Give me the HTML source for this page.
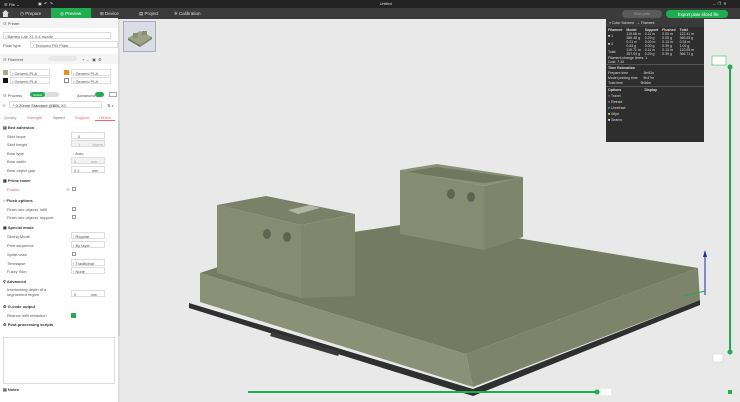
<!DOCTYPE html>
<html><head><meta charset="utf-8"><style>
*{margin:0;padding:0;box-sizing:border-box}
body{width:740px;height:402px;overflow:hidden;background:#e9e9e9;font-family:"Liberation Sans",sans-serif;font-size:4px;color:#555;position:relative}
.a{position:absolute}
.t{position:absolute;white-space:nowrap}
.hd{position:absolute;left:0;width:118px;height:10px;background:#f4f4f4;font-weight:bold;color:#333}
.inp{position:absolute;height:7px;border:1px solid #ddd;background:#fff}
.chk{position:absolute;width:4px;height:4px;border:1px solid #999}
.lg td{padding:0 2px;font-size:3.5px;color:#ddd;white-space:nowrap}
</style></head><body>
<!-- title bar -->
<div class="a" style="left:0;top:0;width:740px;height:8px;background:#232323"></div>
<div class="t" style="left:4px;top:2px;color:#ddd">☰ File ⌄</div>
<div class="t" style="left:38px;top:1px;color:#ddd">▣ &nbsp;↶ &nbsp;↷</div>
<div class="t" style="left:380px;top:2px;color:#ddd;font-size:3.5px">Untitled</div>
<div class="t" style="left:713px;top:1px;color:#ddd">–&nbsp;&nbsp;❐&nbsp;&nbsp;✕</div>
<!-- tab bar -->
<div class="a" style="left:0;top:8px;width:740px;height:11px;background:#3b3b3b"></div>
<div class="a" style="left:2px;top:10px;width:7px;height:7px;background:#ddd;clip-path:polygon(50% 0,100% 45%,85% 45%,85% 100%,15% 100%,15% 45%,0 45%)"></div>
<div class="a" style="left:51px;top:8px;width:40px;height:11px;background:#1fae4f"></div>
<div class="t" style="left:20px;top:11px;color:#ddd;font-size:4.5px">◷ Prepare</div>
<div class="t" style="left:60px;top:11px;color:#fff;font-size:4.5px">◎ Preview</div>
<div class="t" style="left:100px;top:11px;color:#ddd;font-size:4.5px">⊞ Device</div>
<div class="t" style="left:139px;top:11px;color:#ddd;font-size:4.5px">▤ Project</div>
<div class="t" style="left:174px;top:11px;color:#ddd;font-size:4.5px">✲ Calibration</div>
<div class="a" style="left:622px;top:10px;width:40px;height:8px;border-radius:4px;background:#5a5a5a"></div>
<div class="t" style="left:634px;top:12px;color:#999;font-size:3.5px">Slice plate</div>
<div class="a" style="left:666px;top:10px;width:62px;height:8px;border-radius:4px;background:#1fae4f"></div>
<div class="t" style="left:678px;top:11.5px;color:#fff;font-size:4.2px">Export plate sliced file</div>

<!-- left panel -->
<div class="a" style="left:0;top:19px;width:118px;height:383px;background:#fff"></div>
<div class="a" style="left:118px;top:19px;width:2px;height:383px;background:#ddd"></div>
<div class="hd" style="top:18px"></div><div class="t" style="left:3px;top:21px">☷ Printer</div>
<div class="inp" style="left:3px;top:32px;width:108px"></div><div class="t" style="left:5px;top:34px">› Bambu Lab X1 0.4 nozzle</div>
<div class="t" style="left:3px;top:43px">Plate type</div>
<div class="inp" style="left:30px;top:41px;width:88px"></div><div class="t" style="left:33px;top:43px">› Textured PEI Plate</div>
<div class="hd" style="top:54px"></div><div class="t" style="left:3px;top:57px">☷ Filament</div>
<div class="a" style="left:48px;top:56px;width:29px;height:5px;border-radius:3px;background:#e8e8e8"></div>
<div class="t" style="left:82px;top:57px">+ &nbsp;– &nbsp;&nbsp;▣ &nbsp;⚙</div>
<div class="a" style="left:3px;top:70px;width:5px;height:5px;background:#a8ad8c"></div>
<div class="a" style="left:64px;top:70px;width:5px;height:5px;background:#f08c1e"></div>
<div class="a" style="left:3px;top:78px;width:5px;height:5px;background:#111"></div>
<div class="a" style="left:64px;top:78px;width:5px;height:5px;border:1px solid #888;background:#fff"></div>
<div class="inp" style="left:10px;top:69px;width:40px"></div><div class="t" style="left:12px;top:71px">› Generic PLA</div>
<div class="inp" style="left:71px;top:69px;width:40px"></div><div class="t" style="left:73px;top:71px">› Generic PLA</div>
<div class="inp" style="left:10px;top:77px;width:40px"></div><div class="t" style="left:12px;top:79px">› Generic PLA</div>
<div class="inp" style="left:71px;top:77px;width:40px"></div><div class="t" style="left:73px;top:79px">› Generic PLA</div>
<div class="hd" style="top:90px;background:#fff"></div><div class="t" style="left:3px;top:93px">☷ Process</div>
<div class="a" style="left:30px;top:92px;width:29px;height:5px;border-radius:3px;background:#ddd"></div>
<div class="a" style="left:30px;top:92px;width:15px;height:5px;border-radius:3px;background:#1fae4f"></div>
<div class="t" style="left:33px;top:93px;color:#fff;font-size:3px">Global</div>
<div class="t" style="left:77px;top:93px">Advanced</div>
<div class="a" style="left:95px;top:92px;width:9px;height:5px;border-radius:3px;background:#1fae4f"></div>
<div class="a" style="left:109px;top:92px;width:8px;height:5px;border:1px solid #aaa"></div>
<div class="inp" style="left:9px;top:101px;width:93px"></div><div class="t" style="left:13px;top:103px;color:#333">* 0.20mm Standard @BBL X1</div>
<div class="t" style="left:2px;top:103px;color:#e66">⟲</div><div class="t" style="left:107px;top:103px">⇅ ⌕</div>
<div class="t" style="left:4px;top:115px;color:#888">Quality</div>
<div class="t" style="left:27px;top:115px;color:#e66">Strength</div>
<div class="t" style="left:53px;top:115px;color:#666">Speed</div>
<div class="t" style="left:75px;top:115px;color:#e66">Support</div>
<div class="t" style="left:99px;top:115px;color:#e66">Others</div>
<div class="a" style="left:95px;top:120px;width:20px;height:1px;background:#e66"></div>
<div class="a" style="left:118px;top:121px;width:2px;height:215px;background:#ccc"></div>
<div style="position:absolute;left:0;top:123px;width:118px;font-size:4px">
<div class="t" style="left:3px;top:2px;font-weight:bold;color:#333">▤ Bed adhesion</div>
<div class="t" style="left:7px;top:11px">Skirt loops</div><div class="inp" style="left:71px;top:9px;width:34px"></div><div class="t" style="left:78px;top:11px">0</div>
<div class="t" style="left:7px;top:19px">Skirt height</div><div class="inp" style="left:71px;top:17px;width:34px;background:#f2f2f2"></div><div class="t" style="left:78px;top:19px;color:#aaa">1 &nbsp;&nbsp;&nbsp;&nbsp;&nbsp;&nbsp;&nbsp;&nbsp;&nbsp;&nbsp;layers</div>
<div class="t" style="left:7px;top:28px">Brim type</div><div class="t" style="left:73px;top:28px">› Auto</div>
<div class="t" style="left:7px;top:36px">Brim width</div><div class="inp" style="left:71px;top:34px;width:34px;background:#f2f2f2"></div><div class="t" style="left:74px;top:36px;color:#aaa">5 &nbsp;&nbsp;&nbsp;&nbsp;&nbsp;&nbsp;&nbsp;&nbsp;&nbsp;&nbsp;&nbsp;&nbsp;mm</div>
<div class="t" style="left:7px;top:45px">Brim-object gap</div><div class="inp" style="left:71px;top:43px;width:34px"></div><div class="t" style="left:74px;top:45px">0.1 &nbsp;&nbsp;&nbsp;&nbsp;&nbsp;&nbsp;&nbsp;&nbsp;&nbsp;&nbsp;mm</div>
<div class="t" style="left:3px;top:55px;font-weight:bold;color:#333">▦ Prime tower</div>
<div class="t" style="left:7px;top:64px;color:#e66">Enable</div><div class="t" style="left:66px;top:64px;color:#e66">⟲</div><div class="chk" style="left:72px;top:64px"></div>
<div class="t" style="left:3px;top:75px;font-weight:bold;color:#333">⌂ Flush options</div>
<div class="t" style="left:7px;top:84px">Flush into objects' infill</div><div class="chk" style="left:72px;top:84px"></div>
<div class="t" style="left:7px;top:92px">Flush into objects' support</div><div class="chk" style="left:72px;top:92px"></div>
<div class="t" style="left:3px;top:102px;font-weight:bold;color:#333">▣ Special mode</div>
<div class="t" style="left:7px;top:111px">Slicing Mode</div><div class="inp" style="left:71px;top:109px;width:34px"></div><div class="t" style="left:73px;top:111px">› Regular</div>
<div class="t" style="left:7px;top:120px">Print sequence</div><div class="inp" style="left:71px;top:118px;width:34px"></div><div class="t" style="left:73px;top:120px">› By layer</div>
<div class="t" style="left:7px;top:129px">Spiral vase</div><div class="chk" style="left:72px;top:129px"></div>
<div class="t" style="left:7px;top:138px">Timelapse</div><div class="inp" style="left:71px;top:136px;width:34px"></div><div class="t" style="left:73px;top:138px">› Traditional</div>
<div class="t" style="left:7px;top:146px">Fuzzy Skin</div><div class="inp" style="left:71px;top:144px;width:34px"></div><div class="t" style="left:73px;top:146px">› None</div>
<div class="t" style="left:3px;top:156px;font-weight:bold;color:#333">⚲ Advanced</div>
<div class="t" style="left:7px;top:165px;line-height:4.5px">Interlocking depth of a<br>segmented region</div><div class="inp" style="left:71px;top:167px;width:34px"></div><div class="t" style="left:74px;top:169px">0 &nbsp;&nbsp;&nbsp;&nbsp;&nbsp;&nbsp;&nbsp;&nbsp;&nbsp;&nbsp;&nbsp;&nbsp;mm</div>
<div class="t" style="left:3px;top:181px;font-weight:bold;color:#333">⚙ G-code output</div>
<div class="t" style="left:7px;top:190px">Reduce infill retraction</div><div class="a" style="left:71px;top:190px;width:5px;height:5px;background:#1fae4f"></div>
<div class="t" style="left:3px;top:199px;font-weight:bold;color:#333">⚙ Post-processing scripts</div>
<div class="a" style="left:3px;top:214px;width:112px;height:47px;border:1px solid #ddd"></div>
<div class="t" style="left:3px;top:264px;font-weight:bold;color:#333">▤ Notes</div>
</div>

<!-- thumbnail -->
<div class="a" style="left:123px;top:21px;width:33px;height:31px;background:#dadde3;border:1px solid #aac"></div>
<svg class="a" style="left:126px;top:26px" width="28" height="22"><polygon points="2,12 14,5 26,11 14,19" fill="#9da284"/><polygon points="2,12 14,19 14,21 2,14" fill="#6d7360"/><polygon points="14,19 26,11 26,13 14,21" fill="#7d836a"/><rect x="7" y="7" width="5" height="5" fill="#8a8f74"/><rect x="16" y="5" width="5" height="4" fill="#8a8f74"/></svg>

<!-- 3D model -->
<svg class="a" style="left:0;top:0" width="740" height="402">
<polygon points="189,303 473,389 700,300 700,305 473,396 189,308" fill="#2f2f2f"/>
<polygon points="272,332 340,352 338,356 270,336" fill="#3a3a3a"/>
<polygon points="200,273 466,354 698,268 420,222 300,240" fill="#747b62"/>
<polygon points="200,273 466,354 473,387 200,302" fill="#8a9176"/>
<polygon points="466,354 698,268 700,300 473,387" fill="#7d846a"/>
<polygon points="217,205 266,196 355,214 301,225" fill="#7a8168"/>
<polygon points="217,205 301,225 301,298 217,273" fill="#858c71"/>
<polygon points="301,225 355,214 355,296 301,298" fill="#80876c"/>
<ellipse cx="267" cy="234" rx="4" ry="5" fill="#5e6450"/><ellipse cx="287" cy="237" rx="4" ry="5" fill="#5e6450"/>
<polygon points="288,210 310,205 320,208 298,214" fill="#c8ccc0" opacity=".7"/>
<polygon points="400,170 437,164 523,177 484,186" fill="#8a9078"/>
<polygon points="404,172 437,167 518,178 484,183" fill="#70775f"/>
<polygon points="400,170 484,186 484,250 400,234" fill="#858c71"/>
<polygon points="484,186 523,177 523,237 484,250" fill="#7e856b"/>
<ellipse cx="451" cy="194" rx="4" ry="5" fill="#5e6450"/><ellipse cx="471" cy="197" rx="4" ry="5" fill="#5e6450"/>
<line x1="705" y1="295" x2="705" y2="255" stroke="#1a2fb0" stroke-width="1"/><polygon points="703,257 707,257 705,250" fill="#1a2fb0"/>
<line x1="685" y1="296" x2="705" y2="291" stroke="#1fae4f" stroke-width="1"/>
<!-- sliders -->
<rect x="729" y="67" width="2" height="286" fill="#1fae4f"/>
<circle cx="730" cy="67" r="2.5" fill="#1fae4f"/><circle cx="730" cy="352" r="2.5" fill="#1fae4f"/>
<rect x="248" y="391" width="350" height="2" fill="#1fae4f"/>
<circle cx="597" cy="392" r="2.5" fill="#1fae4f"/>
<rect x="728" y="390" width="4" height="4" fill="#1fae4f"/>
<rect x="712" y="56" width="14" height="9" fill="#fff" stroke="#1fae4f" stroke-width=".5"/>
<rect x="713" y="354" width="10" height="8" fill="#fff" stroke="#ccc" stroke-width=".5"/>
<rect x="601" y="389" width="10" height="6" fill="#fff"/>
</svg>

<!-- legend -->
<div class="a" style="left:606px;top:19px;width:98px;height:123px;background:#2e2e2e;color:#ddd;font-size:3.5px">
<div style="background:#3a3a3a;height:8px;padding:2px 3px">≡ Color Scheme &nbsp;&nbsp;⌄ Filament</div>
<table class="lg" style="border-collapse:collapse;margin-top:1px">
<tr style="font-weight:bold"><td>Filament</td><td>Model</td><td>Support</td><td>Flushed</td><td>Total</td></tr>
<tr><td>■ 1</td><td>119.68 m<br>356.48 g</td><td>0.11 m<br>0.29 g</td><td>0.00 m<br>0.00 g</td><td>122.41 m<br>365.65 g</td></tr>
<tr><td>■ 4</td><td>0.21 m<br>0.63 g</td><td>0.00 m<br>0.00 g</td><td>0.13 m<br>0.39 g</td><td>0.34 m<br>1.02 g</td></tr>
<tr><td>Total</td><td>119.71 m<br>357.09 g</td><td>0.11 m<br>0.29 g</td><td>0.13 m<br>0.39 g</td><td>122.95 m<br>366.71 g</td></tr>
</table>
<div style="padding:0 2px">Filament change times: 1<br>Cost: 7.33</div>
<div style="border-top:1px solid #555;padding:1px 2px;font-weight:bold">Time Estimation</div>
<div style="padding:0 2px;line-height:5px">Prepare time &nbsp;&nbsp;&nbsp;&nbsp;&nbsp;&nbsp;&nbsp;&nbsp;&nbsp;&nbsp;&nbsp;&nbsp;&nbsp;&nbsp;&nbsp;8m51s<br>Model printing time &nbsp;&nbsp;&nbsp;&nbsp;&nbsp;9h47m<br>Total time &nbsp;&nbsp;&nbsp;&nbsp;&nbsp;&nbsp;&nbsp;&nbsp;&nbsp;&nbsp;&nbsp;&nbsp;&nbsp;&nbsp;&nbsp;&nbsp;&nbsp;9h56m</div>
<div style="border-top:1px solid #555;padding:1px 2px;font-weight:bold">Options &nbsp;&nbsp;&nbsp;&nbsp;&nbsp;&nbsp;&nbsp;&nbsp;&nbsp;&nbsp;&nbsp;&nbsp;&nbsp;&nbsp;&nbsp;&nbsp;&nbsp;&nbsp;&nbsp;&nbsp;&nbsp;&nbsp;&nbsp;Display</div>
<div style="padding:0 2px;line-height:6px"><span style="color:#5060c0">■</span> Travel<br><span style="color:#c040c0">■</span> Retract<br><span style="color:#30a0c0">■</span> Unretract<br><span style="color:#e0e030">■</span> Wipe<br><span style="color:#eee">■</span> Seams</div>
</div>
</body></html>
